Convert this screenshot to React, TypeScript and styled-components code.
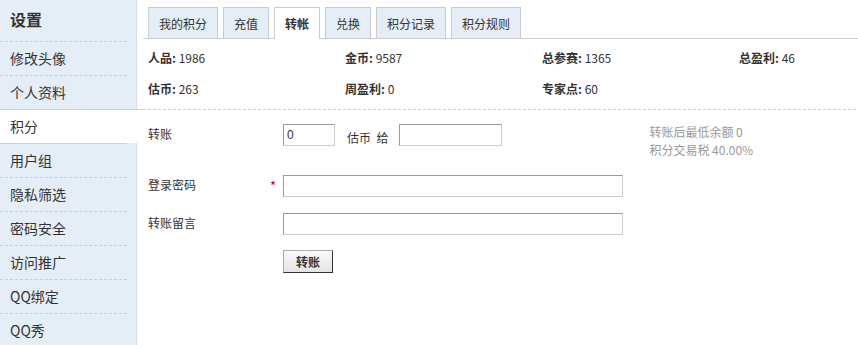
import React from "react";
import styled, { createGlobalStyle } from "styled-components";

const GlobalStyle = createGlobalStyle`
  body {
    margin: 0;
    background: #fff;
    font-family: "Noto Sans CJK SC", "DejaVu Sans", sans-serif;
    font-size: 12px;
    color: #333;
  }
`;

const menu = ["修改头像", "个人资料", "积分", "用户组", "隐私筛选", "密码安全", "访问推广", "QQ绑定", "QQ秀"];
const tabs = ["我的积分", "充值", "转帐", "兑换", "积分记录", "积分规则"];
const stats = [
  ["人品", "1986"],
  ["金币", "9587"],
  ["总参赛", "1365"],
  ["总盈利", "46"],
  ["估币", "263"],
  ["周盈利", "0"],
  ["专家点", "60"],
];

const App = () => {
  return (
    <Page>
      <GlobalStyle />
      <Sidebar>
        <SideTitle>设置</SideTitle>
        {menu.map((m, i) => (
          <MenuItem key={m} active={m === "积分"} before={menu[i + 1] === "积分"} after={menu[i - 1] === "积分"}>
            {m}
          </MenuItem>
        ))}
      </Sidebar>
      <Main>
        <TabBar>
          {tabs.map((t) => (
            <Tab key={t} active={t === "转帐"}>
              {t}
            </Tab>
          ))}
        </TabBar>
        <Stats>
          {stats.map(([k, v]) => (
            <Stat key={k}>
              <b>{k}:</b> {v}
            </Stat>
          ))}
        </Stats>
        <Form>
          <Row>
            <Label>转账</Label>
            <Field>
              <Input w={52} defaultValue="0" />
              <Unit>估币&nbsp;&nbsp;给</Unit>
              <Input w={103} />
            </Field>
            <Hint>
              转账后最低余额 0
              <br />
              积分交易税 40.00%
            </Hint>
          </Row>
          <Row>
            <Label>登录密码</Label>
            <Star>*</Star>
            <Field>
              <Input w={340} type="password" />
            </Field>
          </Row>
          <Row>
            <Label>转账留言</Label>
            <Field>
              <Input w={340} />
            </Field>
          </Row>
          <Row>
            <Label />
            <Field>
              <Button>转账</Button>
            </Field>
          </Row>
        </Form>
      </Main>
    </Page>
  );
};
export default App;

const Page = styled.div`
  display: flex;
  height: 345px;
  overflow: hidden;
`;

const Sidebar = styled.div`
  width: 137px;
  flex-shrink: 0;
  background: #e5edf6;
  border-right: 1px solid #d6dfe8;
  box-sizing: border-box;
`;

const SideTitle = styled.div`
  height: 41px;
  line-height: 38px;
  padding-left: 10px;
  font-size: 16px;
  font-weight: bold;
  color: #333;
  border-bottom: 1px dashed #c8ced6;
  margin-right: 9px;
`;

const MenuItem = styled.div<{ active?: boolean; before?: boolean; after?: boolean }>`
  height: 33px;
  line-height: 33px;
  padding-left: 10px;
  font-size: 14px;
  color: #333;
  margin-right: ${(p) => (p.active ? "-1px" : "9px")};
  background: ${(p) => (p.active ? "#fff" : "transparent")};
  border-bottom: ${(p) => (p.before || p.active ? "none" : "1px dashed #c8ced6")};
  ${(p) => (p.before ? "padding-right: 9px; border-bottom: 1px solid #c9d2dc; margin-right: -9px;" : "")}
  ${(p) => (p.after ? "border-top: 1px solid #c9d2dc;" : "")}
  &:last-child {
    border-bottom: none;
  }
`;

const Main = styled.div`
  flex: 1;
  padding-left: 6px;
  padding-top: 7px;
`;

const TabBar = styled.div`
  display: flex;
  gap: 5px;
  padding-left: 5px;
  border-bottom: 1px solid #ccc;
  height: 31px;
`;

const Tab = styled.div<{ active?: boolean }>`
  line-height: 31px;
  padding: 0 10px;
  border: 1px solid #ccc;
  border-bottom: none;
  background: ${(p) => (p.active ? "#fff" : "#e5edf6")};
  font-weight: ${(p) => (p.active ? "bold" : "normal")};
  color: #333;
  box-sizing: border-box;
  height: ${(p) => (p.active ? "32px" : "31px")};
`;

const Stats = styled.div`
  display: grid;
  grid-template-columns: repeat(4, 197px);
  padding: 9px 0 0 5px;
  border-bottom: 1px dashed #ccc;
  height: 61px;
`;

const Stat = styled.div`
  height: 31px;
  line-height: 20px;
  color: #333;
`;

const Form = styled.div`
  padding: 14px 0 0 5px;
  display: flex;
  flex-direction: column;
  gap: 16px;
`;

const Row = styled.div`
  display: flex;
  align-items: flex-start;
  position: relative;
  min-height: 22px;
`;

const Label = styled.div`
  width: 135px;
  line-height: 20px;
`;

const Star = styled.span`
  position: absolute;
  left: 122px;
  top: 1px;
  color: #c00;
  font-size: 13px;
`;

const Field = styled.div`
  display: flex;
  align-items: center;
`;

const Input = styled.input<{ w: number }>`
  width: ${(p) => p.w}px;
  height: 22px;
  box-sizing: border-box;
  border: 1px solid #ccc;
  border-top-color: #999;
  border-left-color: #999;
  padding: 0 3px;
  font-size: 12px;
  font-family: "Liberation Sans", sans-serif;
  color: #333;
  outline: none;
`;

const Unit = styled.span`
  margin: 0 11px 0 12px;
  padding-top: 4px;
`;

const Hint = styled.div`
  margin-left: 147px;
  color: #999;
  line-height: 18px;
  margin-top: -1px;
`;

const Button = styled.button`
  width: 50px;
  height: 23px;
  border: 1px solid #333;
  border-color: #aaa #333 #333 #aaa;
  background: linear-gradient(#fafafa, #e4e4e4);
  font-weight: bold;
  font-size: 12px;
  font-family: "Noto Sans CJK SC", sans-serif;
  color: #333;
  padding: 0;
  margin-top: -1px;
`;
